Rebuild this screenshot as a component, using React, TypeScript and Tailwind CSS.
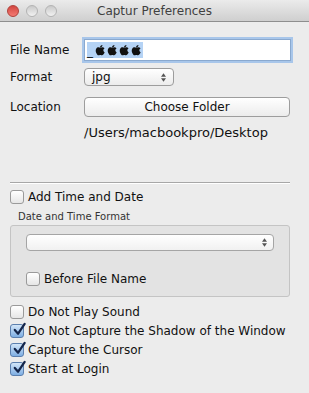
import React from 'react'

const font = { fontFamily: '"DejaVu Sans", "Lucida Grande", sans-serif' }

function Apple() {
  return (
    <svg viewBox="0 0 14 16" className="w-[11px] h-[12px] inline-block" fill="#111">
      <path d="M9.6 1.2c.1 1-.3 1.9-.9 2.6-.6.7-1.5 1.1-2.3 1-.1-.9.3-1.9.9-2.5.6-.7 1.6-1.1 2.3-1.1zM12.4 11.3c-.3.8-.5 1.1-.9 1.8-.6.9-1.4 2-2.4 2-.9 0-1.1-.6-2.3-.6s-1.5.6-2.4.6c-1 0-1.7-1-2.300-1.9C.4 10.8.2 7.8 1.3 6.2c.7-1.1 1.9-1.8 3-1.8s1.8.6 2.7.6c.9 0 1.4-.6 2.7-.6 1 0 2 .5 2.7 1.4-2.4 1.300-2 4.7.3 5.5z" />
    </svg>
  )
}

function Check({ on }: { on?: boolean }) {
  return (
    <span
      className={
        on
          ? 'relative w-[14px] h-[14px] shrink-0 rounded-[3px] border border-[#5b7fae] bg-gradient-to-b from-[#d3e6f8] to-[#7eaee3]'
          : 'relative w-[14px] h-[14px] shrink-0 rounded-[3px] border border-[#9a9a9a] bg-gradient-to-b from-white to-[#e6e6e6]'
      }
    >
      {on && (
        <svg viewBox="0 0 16 16" className="absolute -top-[3px] left-[1px] w-[15px] h-[15px]">
          <path d="M3 8.5 L6.5 12.5 L13.5 2" fill="none" stroke="#14254a" strokeWidth="2.4" strokeLinecap="round" strokeLinejoin="round" />
        </svg>
      )}
    </span>
  )
}

function Arrows() {
  return (
    <svg viewBox="0 0 6 10" className="w-[5px] h-[9px]" fill="#555">
      <path d="M3 0 L6 4 H0 Z M0 6 H6 L3 10 Z" />
    </svg>
  )
}

const row = 'flex items-center gap-[4px] h-[19px]'

export default function App() {
  return (
    <div className="w-[309px] h-[393px] bg-[#ececec] overflow-hidden text-[#111] leading-[14px]" style={font}>
      {/* title bar */}
      <div className="relative h-[22px] flex items-center justify-center bg-gradient-to-b from-[#ebebeb] to-[#cfcfcf] border-b border-[#8e8e8e]">
        <div className="absolute left-[7px] top-[5px] flex gap-[7px]">
          <span className="w-[12px] h-[12px] rounded-full bg-gradient-to-b from-[#d2453f] to-[#f47a73] border border-[#b0423b]" />
          <span className="w-[12px] h-[12px] rounded-full bg-gradient-to-b from-[#c9c9c9] to-[#f2f2f2] border border-[#b3b3b3]" />
          <span className="w-[12px] h-[12px] rounded-full bg-gradient-to-b from-[#c9c9c9] to-[#f2f2f2] border border-[#b3b3b3]" />
        </div>
        <span className="text-[12px] text-[#404040]">Captur Preferences</span>
      </div>

      <div className="px-[10px] pt-[17px] text-[12px]">
        <div className="flex items-center h-[22px]">
          <span className="w-[74px]">File Name</span>
          <div className="flex-1 h-[22px] mr-[8px] bg-white border border-[#8aa9cf] shadow-[0_0_0_2px_#a8c6ea] flex items-center pl-[2px]">
            <span className="bg-[#b5d3f5] flex gap-[1px] pr-[1px] h-[16px] items-center">
              <span className="self-end leading-[14px] w-[7px]">_</span>
              <Apple /><Apple /><Apple /><Apple />
            </span>
          </div>
        </div>

        <div className="flex items-center mt-[7px] h-[18px]">
          <span className="w-[74px]">Format</span>
          <div className="w-[90px] h-[18px] rounded-[4px] border border-[#9d9d9d] bg-gradient-to-b from-white to-[#ececec] flex items-center justify-between px-[7px]">
            <span>jpg</span>
            <Arrows />
          </div>
        </div>

        <div className="flex items-center mt-[11px] h-[20px]">
          <span className="w-[74px]">Location</span>
          <div className="flex-1 mr-[9px] h-[20px] rounded-[4px] border border-[#9d9d9d] bg-gradient-to-b from-white to-[#ececec] flex items-center justify-center">
            Choose Folder
          </div>
        </div>

        <div className="pl-[74px] mt-[8px] text-[13px] leading-[16px]">/Users/macbookpro/Desktop</div>

        <div className="mt-[41px] mr-[9px] h-px bg-[#a7a7a7] border-b border-white box-content" />

        <label className="flex items-center gap-[4px] mt-[6px] h-[14px]">
          <Check />
          <span>Add Time and Date</span>
        </label>

        <div className="text-[10px] leading-[12px] h-[12px] text-[#333] ml-[8px] mt-[7px]">Date and Time Format</div>

        <div className="mt-[2px] mr-[9px] h-[72px] rounded-[3px] border border-[#c4c4c4] bg-[#e3e3e3] px-[15px] pt-[8px]">
          <div className="h-[17px] rounded-[4px] border border-[#a5a5a5] bg-gradient-to-b from-white to-[#f1f1f1] flex items-center justify-end pr-[6px]">
            <Arrows />
          </div>
          <label className="flex items-center gap-[4px] mt-[21px] h-[14px]">
            <Check />
            <span>Before File Name</span>
          </label>
        </div>

        <div className="mt-[5px] flex flex-col">
          <label className={row}><Check /><span>Do Not Play Sound</span></label>
          <label className={row}><Check on /><span>Do Not Capture the Shadow of the Window</span></label>
          <label className={row}><Check on /><span>Capture the Cursor</span></label>
          <label className={row}><Check on /><span>Start at Login</span></label>
        </div>
      </div>
    </div>
  )
}
